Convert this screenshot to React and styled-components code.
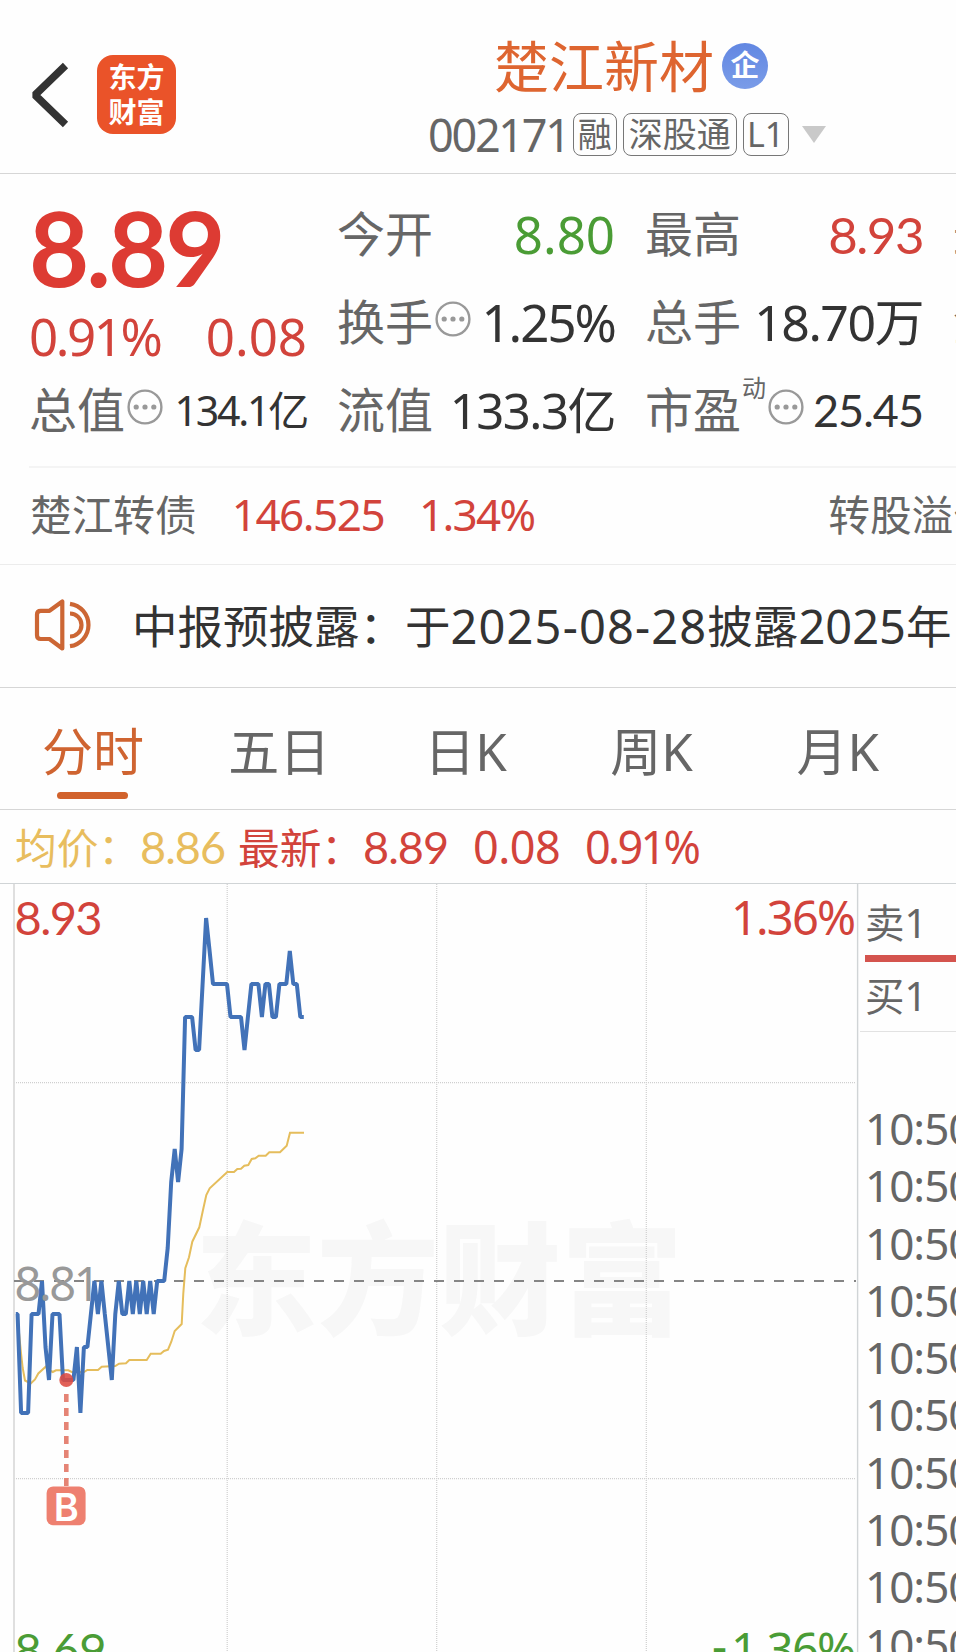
import React from "react";
import styled, { createGlobalStyle } from "styled-components";

const RED = "#d2433b";
const GREEN = "#4a9c35";
const DARK = "#333333";
const GREY = "#666666";

// last price of every minute, in cents above 8.00
const prices = [
  80, 77, 77, 77, 80, 80, 80, 81, 79, 78, 80, 80, 80, 78, 78, 78, 78, 79, 77,
  79, 79, 80, 81, 80, 81, 80, 79, 78, 80, 81, 80, 80, 81, 80, 81, 80, 81, 80,
  81, 80, 81, 81, 81, 82, 84, 85, 84, 85, 89, 89, 89, 88, 88, 90, 92, 91, 90,
  90, 90, 90, 90, 89, 89, 89, 89, 88, 89, 90, 90, 90, 89, 90, 90, 89, 89, 90,
  90, 90, 91, 90, 90, 89, 89,
];

const toX = (i) => 17.6 + i * 3.49;
const toY = (p) => 1281 - (p - 81) * 33;

const priceLine =
  "15.8,1314 " +
  prices.map((p, i) => `${toX(i).toFixed(1)},${toY(p)}`).join(" ");

const averageLine =
  "17.6,1318 21,1353 22.7,1368 25,1380.5 30.7,1383.5 35,1379.5 38.3,1373.5 45.7,1366.7 49,1370 52.7,1372 56,1370.3 68.3,1370.3 71.7,1372 84,1372 87.3,1370 98,1370 101.7,1366.7 115.3,1366 119,1363.7 126,1363.3 129.3,1360 146.7,1360 150.7,1353.7 160.7,1353.7 164,1351 168,1349.7 171.3,1341.7 174.7,1331 181.7,1324 183.3,1293.3 185.3,1268.3 189,1257.3 192.3,1241.7 199.3,1227.3 203,1210 206.3,1195 209.7,1188.3 227.3,1172 234,1172 237.3,1169 241,1168.7 244.3,1165.7 248.3,1165 251.7,1159 255.3,1158.3 258.7,1155.7 265.7,1155.7 269.3,1152.3 280,1152.3 286.7,1145.7 290,1132.7 304,1132.7";

const tabs = ["分时", "五日", "日K", "周K", "月K"];

const More = () => (
  <MoreIcon viewBox="0 0 36 36">
    <circle cx="18" cy="18" r="16.4" />
    <circle cx="9.2" cy="18" r="2.6" className="dot" />
    <circle cx="18" cy="18" r="2.6" className="dot" />
    <circle cx="26.8" cy="18" r="2.6" className="dot" />
  </MoreIcon>
);

const Chart = () => (
  <ChartSvg viewBox="0 884 860 768">
    <text x="195" y="1325" textLength="488" className="watermark">
      东方财富
    </text>
    <g stroke="#cfcfcf" strokeWidth="1.2" strokeDasharray="1 1">
      <path d="M227.2 884V1652M436.7 884V1652M646.3 884V1652" />
      <path d="M14 1082.7H856M14 1478.7H856" />
    </g>
    <path d="M14 884V1652" stroke="#dcdcdc" strokeWidth="1.8" />
    <path d="M857.6 884V1652" stroke="#d0d4d6" strokeWidth="1.4" />
    <path
      d="M14 1281H856"
      stroke="#858585"
      strokeWidth="1.9"
      strokeDasharray="10 10"
    />
    <polyline points={averageLine} stroke="#e5bd5c" strokeWidth="2" />
    <polyline
      points={priceLine}
      stroke="#4272b8"
      strokeWidth="4"
      strokeLinejoin="bevel"
    />
    <g className="axis">
      <text x="14.6" y="935" textLength="88" fill={RED} className="round">
        8.93
      </text>
      <text x="731" y="935" textLength="125" fill={RED}>
        1.36%
      </text>
      <text x="14.6" y="1301" textLength="86" fill="#999999">
        8.81
      </text>
      <text x="14.6" y="1666.5" textLength="92" fill={GREEN} className="round">
        8.69
      </text>
      <text x="712" y="1662.5" fill={GREEN}>
        -
      </text>
      <text x="731" y="1666.5" textLength="125" fill={GREEN}>
        1.36%
      </text>
    </g>
    <circle cx="66.3" cy="1380" r="7" fill="#dd4a40" opacity="0.88" />
    <path
      d="M66.3 1394V1486"
      stroke="#e58475"
      strokeWidth="4.6"
      strokeDasharray="8 6"
    />
    <rect x="46.6" y="1486.4" width="39" height="38.8" rx="6.5" fill="#ee8070" />
    <text x="66.3" y="1520.5" textAnchor="middle" className="buy">
      B
    </text>
  </ChartSvg>
);

const App = () => {
  return (
    <Page>
      <GlobalStyle />
      <Header>
        <BackIcon viewBox="0 0 40 68">
          <path d="M35.5 4.5 5 34l30.5 29.5" />
        </BackIcon>
        <Logo>
          <span>东方</span>
          <span>财富</span>
        </Logo>
        <Stock>
          <Name>
            楚江新材
            <Company>企</Company>
          </Name>
          <Code>
            <Num $size={45} $ls={-2.3} $color={GREY}>002171</Num>
            <Tag $width={44}>融</Tag>
            <Tag $width={114}>深股通</Tag>
            <Tag $width={46}>L1</Tag>
            <Triangle />
          </Code>
        </Stock>
      </Header>

      <Quote>
        <Column>
          <Price>8.89</Price>
          <Change>
            <Num $size={51} $ls={-2.4} $color={RED}>0.91%</Num>
            <Num $size={51} $ls={0} $color={RED}>0.08</Num>
          </Change>
          <Cell>
            <Label>总值</Label>
            <More />
            <Num $size={41} $ls={-2.2}>134.1亿</Num>
          </Cell>
        </Column>
        <Column>
          <Cell>
            <Label>今开</Label>
            <Num $size={51} $ls={0} $color={GREEN}>8.80</Num>
          </Cell>
          <Cell>
            <Label>换手</Label>
            <More />
            <Num $size={51} $ls={-2}>1.25%</Num>
          </Cell>
          <Cell>
            <Label>流值</Label>
            <Num $size={49} $ls={-1.5}>133.3亿</Num>
          </Cell>
        </Column>
        <Column>
          <Cell>
            <Label>最高</Label>
            <Num $size={51} $ls={-1.5} $color={RED} $round>8.93</Num>
          </Cell>
          <Cell>
            <Label>总手</Label>
            <Num $size={50} $ls={-1.5}>18.70万</Num>
          </Cell>
          <Cell>
            <Label>市盈</Label>
            <Sup>动</Sup>
            <More />
            <Num $size={45} $ls={-1} $round>25.45</Num>
          </Cell>
        </Column>
        <Column>
          <Cell>
            <Label>最低</Label>
          </Cell>
          <Cell>
            <Label>金额</Label>
          </Cell>
        </Column>
      </Quote>

      <Bond>
        <BondName>楚江转债</BondName>
        <Num $size={44} $ls={-1.5} $color={RED}>146.525</Num>
        <Num $size={44} $ls={-1.7} $color={RED}>1.34%</Num>
        <Premium>转股溢价</Premium>
      </Bond>

      <Notice>
        <SpeakerIcon viewBox="0 0 62 56">
          <path d="M3 16.5Q3 12.8 6.7 12.8H15.5L28.3 3.5V50.5L15.5 41H6.7Q3 41 3 37.3Z" />
          <path d="M36 15.5A11.5 11.5 0 0 1 36 38.5M36 5.8A21.4 21.4 0 0 1 36 48.2" />
        </SpeakerIcon>
        <NoticeText>
          中报预披露：于<Num $size={47} $ls={1.15}>2025-08-28</Num>披露
          <Num $size={47} $ls={0}>2025</Num>年
        </NoticeText>
      </Notice>

      <Tabs>
        {tabs.map((tab, i) => (
          <Tab key={tab} $active={i === 0}>
            {tab}
          </Tab>
        ))}
      </Tabs>

      <Legend>
        <LegendItem $color="#e8bd5e" $width={223}>
          均价：<Num $size={45} $ls={-1} $color="inherit" $round>8.86</Num>
        </LegendItem>
        <LegendItem $color={RED} $width={235}>
          最新：<Num $size={45} $ls={-1} $color="inherit" $round>8.89</Num>
        </LegendItem>
        <LegendItem $color={RED} $width={112}>
          <Num $size={45} $ls={-0.5} $color="inherit">0.08</Num>
        </LegendItem>
        <LegendItem $color={RED}>
          <Num $size={45} $ls={-2.7} $color="inherit">0.91%</Num>
        </LegendItem>
      </Legend>

      <Body>
        <Chart />
        <Side>
          <Orders>
            <Order>卖1</Order>
            <Bar />
            <Order>买1</Order>
          </Orders>
          <Ticks>
            {Array.from({ length: 10 }, (_, i) => (
              <Tick key={i}>10:50</Tick>
            ))}
          </Ticks>
        </Side>
      </Body>
    </Page>
  );
};

export default App;

const GlobalStyle = createGlobalStyle`
  * {
    box-sizing: border-box;
  }
  body {
    margin: 0;
    background: #fdfdfd;
  }
`;

const Page = styled.div`
  width: 956px;
  height: 1652px;
  overflow: hidden;
  display: flex;
  flex-direction: column;
  background: #fefefe;
  color: ${DARK};
  font-family: "Noto Sans", "Noto Sans CJK SC", sans-serif;
  white-space: nowrap;
`;

const Num = styled.span`
  font-family: ${(p) => (p.$round ? "Lato, sans-serif" : "inherit")};
  font-size: ${(p) => p.$size}px;
  letter-spacing: ${(p) => p.$ls}px;
  color: ${(p) => p.$color || DARK};
  line-height: 1;
`;

const Header = styled.header`
  height: 174px;
  flex: none;
  display: flex;
  align-items: flex-start;
  border-bottom: 1px solid #d6d6d6;
`;

const BackIcon = styled.svg`
  width: 40px;
  height: 68px;
  margin: 61px 27px 0 30px;
  fill: none;
  stroke: ${DARK};
  stroke-width: 7.5;
  stroke-linejoin: bevel;
`;

const Logo = styled.div`
  width: 79px;
  height: 79px;
  margin-top: 55px;
  padding-top: 5px;
  border-radius: 16px;
  background: #ea5329;
  color: #fff;
  display: flex;
  flex-direction: column;
  align-items: center;
  font-size: 28px;
  font-weight: 700;
  line-height: 34.5px;
`;

const Stock = styled.div`
  margin-left: 252px;
  width: 400px;
`;

const Name = styled.div`
  height: 60px;
  margin: 36px 0 0 66px;
  display: flex;
  align-items: center;
  font-size: 55px;
  line-height: 60px;
  color: #de6530;
`;

const Company = styled.span`
  width: 46px;
  height: 46px;
  margin-left: 8px;
  border-radius: 50%;
  background: linear-gradient(#6287e2, #7a9ce8);
  color: #fff;
  font-size: 29px;
  font-weight: 700;
  line-height: 44px;
  text-align: center;
`;

const Code = styled.div`
  height: 44px;
  margin-top: 16px;
  display: flex;
  align-items: center;

  ${Num} {
    margin-right: 4px;
  }
`;

const Tag = styled.span`
  width: ${(p) => p.$width}px;
  height: 43px;
  margin-right: 6px;
  flex: none;
  border: 1.5px solid #777;
  border-radius: 8px;
  color: ${GREY};
  font-size: 34px;
  line-height: 40px;
  text-align: center;
`;

const Triangle = styled.span`
  margin-left: 7px;
  border: 12.5px solid transparent;
  border-top: 17px solid #c9c9c9;
  border-bottom: 0;
`;

const Quote = styled.section`
  height: 294px;
  flex: none;
  margin-left: 29px;
  padding-top: 16px;
  display: grid;
  grid-template-columns: repeat(4, 278px);
  gap: 30px;
  overflow: hidden;
  border-bottom: 2px solid #f4f4f4;
`;

const Column = styled.div`
  display: flex;
  flex-direction: column;
`;

const Cell = styled.div`
  height: 88px;
  display: flex;
  align-items: center;

  ${Num} {
    margin-left: auto;
  }
`;

const Label = styled.span`
  font-size: 48px;
  line-height: 1;
  color: ${GREY};
`;

const Sup = styled.sup`
  font-size: 24px;
  line-height: 1;
  color: ${GREY};
  align-self: flex-start;
  margin: 10px 0 0 1px;
`;

const MoreIcon = styled.svg`
  width: 36px;
  height: 36px;
  flex: none;
  margin: -7px 0 0 2px;
  fill: none;
  stroke: #999;
  stroke-width: 2.4;

  .dot {
    fill: #999;
    stroke: none;
  }
`;

const Price = styled.div`
  height: 116px;
  font-family: Lato, sans-serif;
  font-size: 104px;
  font-weight: 700;
  letter-spacing: -3px;
  line-height: 114px;
  color: #dd3b33;
`;

const Change = styled.div`
  height: 60px;
  display: flex;
  align-items: center;
  justify-content: space-between;
`;

const Bond = styled.section`
  height: 97px;
  flex: none;
  padding: 0 0 2px 30px;
  display: flex;
  align-items: center;
  border-bottom: 1px solid #ececec;

  ${Num} {
    margin: -2px 0 0 35px;
  }
`;

const BondName = styled.span`
  font-size: 41.7px;
  color: ${GREY};
  line-height: 1;
`;

const Premium = styled(BondName)`
  margin-left: auto;
  margin-right: -39px;
`;

const Notice = styled.section`
  height: 123px;
  flex: none;
  padding-left: 34px;
  display: flex;
  align-items: center;
  border-bottom: 1px solid #d6d6d6;
`;

const SpeakerIcon = styled.svg`
  width: 62px;
  height: 56px;
  flex: none;
  fill: none;
  stroke: #cc6634;
  stroke-width: 4.2;
  stroke-linejoin: round;
`;

const NoticeText = styled.div`
  margin-left: 36px;
  font-size: 45.5px;
  line-height: 60px;
`;

const Tabs = styled.nav`
  height: 122px;
  flex: none;
  display: flex;
  border-bottom: 1px solid #d6d6d6;
`;

const Tab = styled.div`
  position: relative;
  width: 186.2px;
  font-size: 51px;
  line-height: 127px;
  text-align: center;
  color: ${(p) => (p.$active ? "#cf6431" : GREY)};

  &::after {
    content: "";
    display: ${(p) => (p.$active ? "block" : "none")};
    position: absolute;
    left: 57px;
    bottom: 10px;
    width: 71px;
    height: 7px;
    border-radius: 4px;
    background: #d1622c;
  }
`;

const Legend = styled.section`
  height: 74px;
  flex: none;
  padding-left: 15px;
  display: flex;
  border-bottom: 1px solid #d0d4d6;
`;

const LegendItem = styled.div`
  width: ${(p) => (p.$width ? `${p.$width}px` : "auto")};
  font-size: 41.7px;
  line-height: 76px;
  color: ${(p) => p.$color};
`;

const Body = styled.main`
  flex: 1;
  display: flex;
  min-height: 0;
`;

const ChartSvg = styled.svg`
  width: 860px;
  height: 768px;
  flex: none;
  fill: none;

  .watermark {
    fill: #f7f7f7;
    font-size: 122px;
    font-weight: 900;
  }
  .axis {
    font-size: 47px;
  }
  .round {
    font-family: Lato, sans-serif;
  }
  .buy {
    fill: #fff;
    font-family: Inter, sans-serif;
    font-size: 38px;
    font-weight: 600;
  }
`;

const Side = styled.aside`
  flex: 1;
  min-width: 0;
  overflow: hidden;
`;

const Orders = styled.div`
  height: 148px;
  margin-left: -2px;
  padding: 6px 0 0 7px;
  border-bottom: 1px solid #e2e2e2;
`;

const Order = styled.div`
  height: 65px;
  font-size: 39.5px;
  line-height: 67px;
  color: ${GREY};

  & + div + & {
    line-height: 69px;
  }
`;

const Bar = styled.div`
  height: 7px;
  background: #d4544e;
`;

const Ticks = styled.div`
  padding: 68px 0 0 5px;
`;

const Tick = styled.div`
  height: 57.3px;
  font-size: 44px;
  line-height: 57px;
  letter-spacing: -1px;
  color: ${GREY};
`;
